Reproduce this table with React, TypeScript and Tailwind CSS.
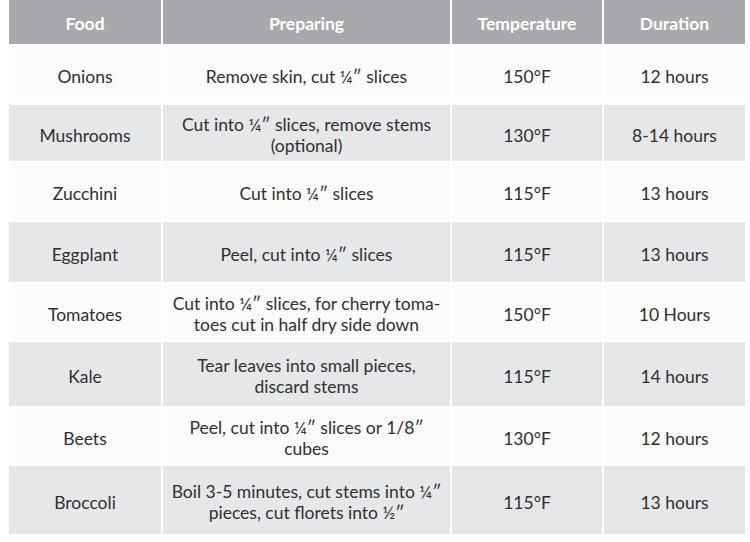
import React from "react";

const rows: { food: string; prep: string[]; temp: string; dur: string; h: string }[] = [
  { food: "Onions", prep: ["Remove skin, cut ¼″ slices"], temp: "150°F", dur: "12 hours", h: "h-[57px]" },
  { food: "Mushrooms", prep: ["Cut into ¼″ slices, remove stems", "(optional)"], temp: "130°F", dur: "8-14 hours", h: "h-[56px]" },
  { food: "Zucchini", prep: ["Cut into ¼″ slices"], temp: "115°F", dur: "13 hours", h: "h-[57px]" },
  { food: "Eggplant", prep: ["Peel, cut into ¼″ slices"], temp: "115°F", dur: "13 hours", h: "h-[60px]" },
  { food: "Tomatoes", prep: ["Cut into ¼″ slices, for cherry toma-", "toes cut in half dry side down"], temp: "150°F", dur: "10 Hours", h: "h-[56px]" },
  { food: "Kale", prep: ["Tear leaves into small pieces,", "discard stems"], temp: "115°F", dur: "14 hours", h: "h-[64px]" },
  { food: "Beets", prep: ["Peel, cut into ¼″ slices or 1/8″", "cubes"], temp: "130°F", dur: "12 hours", h: "h-[56px]" },
  { food: "Broccoli", prep: ["Boil 3-5 minutes, cut stems into ¼″", "pieces, cut florets into ½″"], temp: "115°F", dur: "13 hours", h: "h-[68px]" },
];

const headers: { label: string; w: string }[] = [
  { label: "Food", w: "w-[152px]" },
  { label: "Preparing", w: "w-[287px]" },
  { label: "Temperature", w: "w-[150px]" },
  { label: "Duration", w: "w-[141px]" },
];

export default function App() {
  return (
    <div className="w-[750px] h-[542px] bg-white pl-[9px] pr-[5px] font-['Lato','Noto_Sans',sans-serif]">
      <div className="flex flex-col gap-[2px]">
        <div className="flex gap-[2px] h-[44px] text-white font-bold text-[17.5px]">
          {headers.map((h) => (
            <div key={h.label} className={`${h.w} bg-[#a7a9ac] pt-[5px] flex items-center justify-center`}>
              {h.label}
            </div>
          ))}
        </div>
        {rows.map((r, i) => {
          const bg = i % 2 === 0 ? "bg-[#fbfbfb]" : "bg-[#e6e7e8]";
          return (
            <div key={r.food} className={`flex gap-[2px] ${r.h} text-[17.5px] text-[#303030] leading-[21px]`}>
              <div className={`w-[152px] ${bg} pt-[4px] flex items-center justify-center`}>{r.food}</div>
              <div className={`w-[287px] ${bg} pt-[4px] flex flex-col items-center justify-center text-center`}>
                {r.prep.map((p) => (
                  <div key={p} className="whitespace-nowrap">{p}</div>
                ))}
              </div>
              <div className={`w-[150px] ${bg} pt-[4px] flex items-center justify-center`}>{r.temp}</div>
              <div className={`w-[141px] ${bg} pt-[4px] flex items-center justify-center`}>{r.dur}</div>
            </div>
          );
        })}
      </div>
    </div>
  );
}
